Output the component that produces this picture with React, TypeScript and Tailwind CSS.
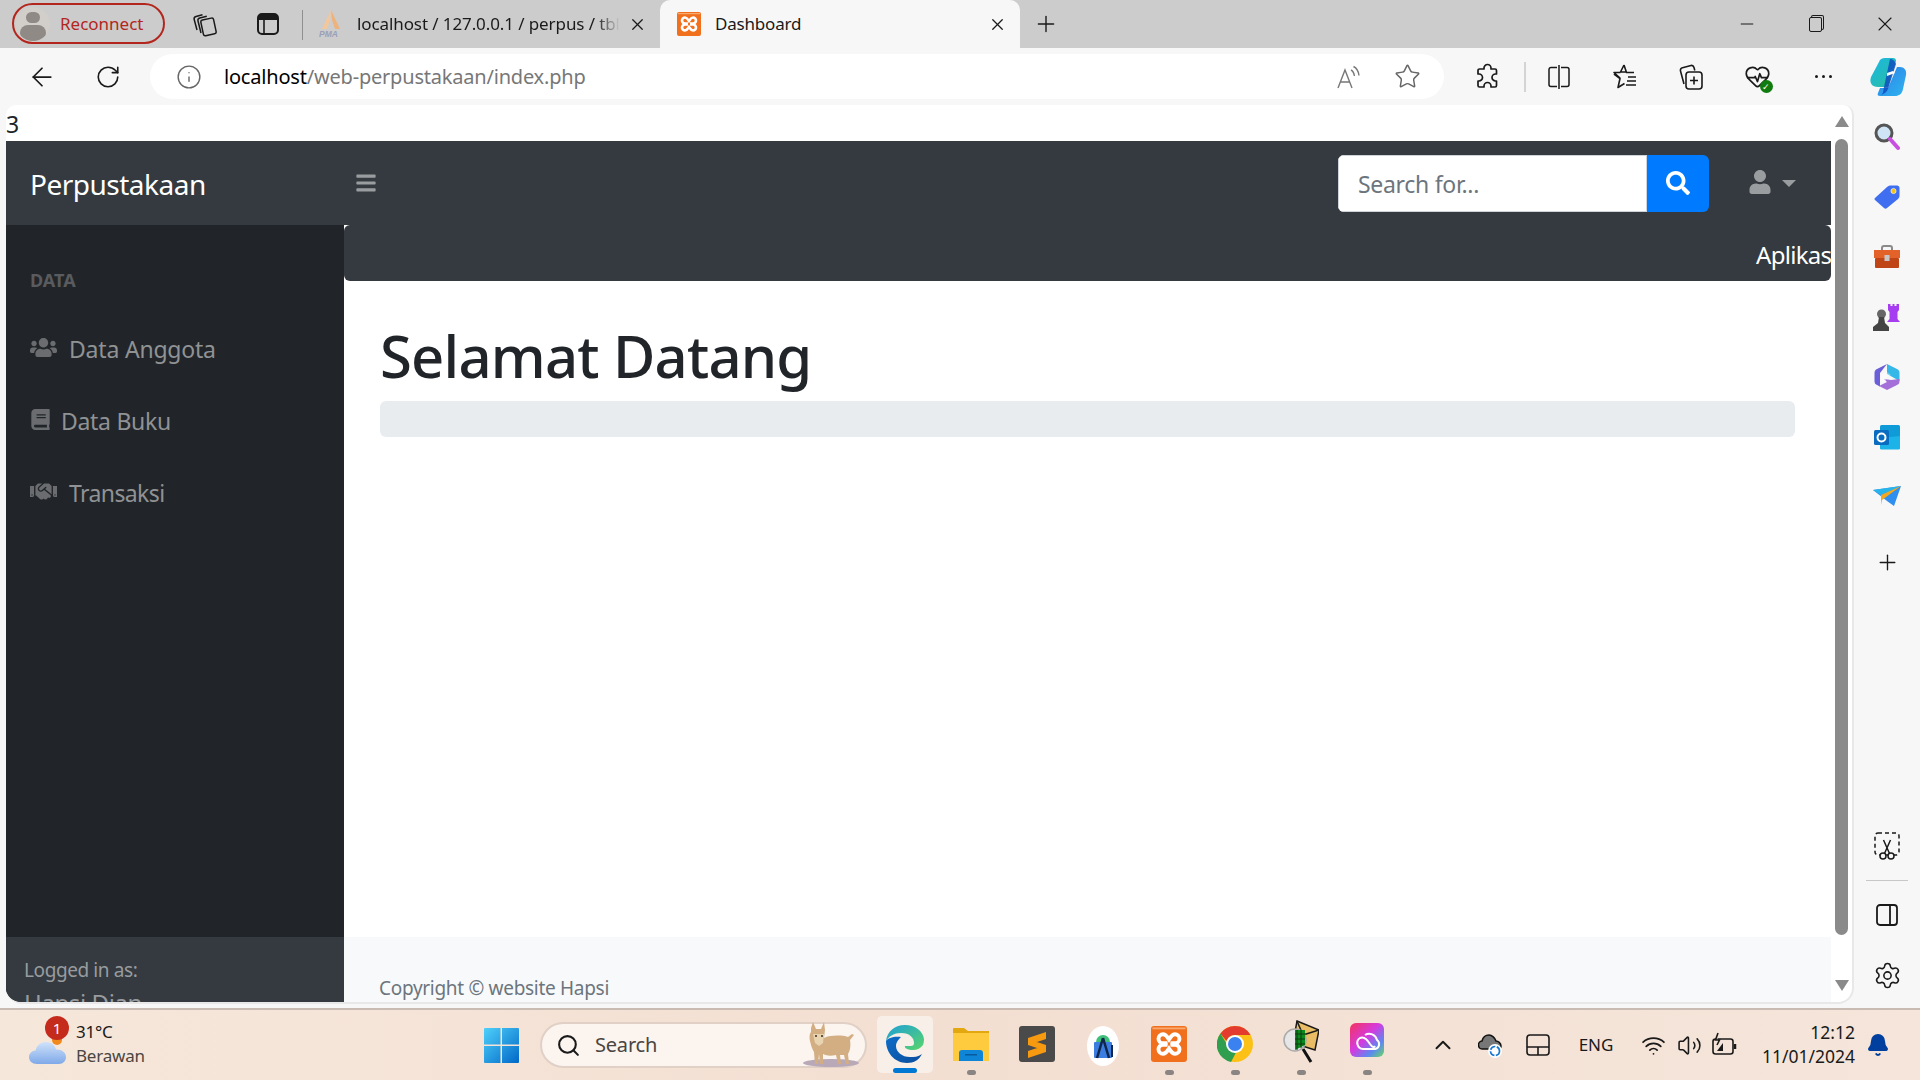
import React from "react";
import { ArrowLeft, RotateCw, Info, Star, Plus, X, Minus, HeartPulse, ChevronUp, Wifi, Volume2, Bell, Settings, Search } from "lucide-react";
import { FaUsers, FaBook, FaHandshake, FaSearch, FaUser, FaBars } from "react-icons/fa";

function Xampp({ s = 24 }: { s?: number }) {
  return (
    <svg width={s} height={s} viewBox="0 0 24 24">
      <rect x="0" y="0" width="24" height="24" rx="2" fill="#f0701e" />
      <rect x="1" y="1" width="22" height="1.2" fill="#f9a870" />
      <g fill="none" stroke="#fff" strokeWidth="2.6">
        <path d="M11 11.5H8a3 3 0 1 1 0-6c2 0 3 2 4 3.5 1-1.5 2-3.5 4-3.5a3 3 0 1 1 0 6h-3" />
        <path d="M11 12.5H8a3 3 0 1 0 0 6c2 0 3-2 4-3.5 1 1.5 2 3.5 4 3.5a3 3 0 1 0 0-6h-3" />
      </g>
    </svg>
  );
}
function Collections() {
  return (
    <svg width="26" height="26" viewBox="0 0 26 26" fill="none" stroke="#1a1a1a" strokeWidth="1.5" strokeLinejoin="round">
      <rect x="11" y="8" width="13" height="16" rx="2" transform="rotate(-12 17 16)" />
      <path d="M10 22 7 10c-.4-1.5.4-2.6 1.8-3l7-1.7" />
      <path d="M6 19 3.2 8.5c-.4-1.5.4-2.6 1.8-3l6.5-1.8" />
    </svg>
  );
}
function TabIcon() {
  return (
    <svg width="24" height="24" viewBox="0 0 24 24" fill="none">
      <rect x="2" y="2" width="20" height="20" rx="4" stroke="#1a1a1a" strokeWidth="2" />
      <path d="M2 6a4 4 0 0 1 4-4h12a4 4 0 0 1 4 4v2H2z" fill="#1a1a1a" />
      <path d="M8 8v14" stroke="#1a1a1a" strokeWidth="1.6" />
    </svg>
  );
}
function Pma() {
  return (
    <svg width="24" height="30" viewBox="0 0 24 30">
      <path d="M12 1 3 20h5l3-9z" fill="#f3c79b" />
      <path d="M12 1 21 20h-5l-3-9z" fill="#eeb27c" />
      <text x="0" y="28" fontSize="8.5" fontStyle="italic" fontWeight="700" fill="#9aa0b8" fontFamily="Liberation Sans">PMA</text>
    </svg>
  );
}
function ReadAloud() {
  return (
    <svg width="26" height="26" viewBox="0 0 26 26" fill="none" stroke="#777" strokeWidth="1.4">
      <path d="M2 24 9 6l7 18M4.5 18h9" />
      <path d="M15 6c2 1 3 3 3.4 6M17.5 2.5c3 1.5 5 4.5 5.5 9" />
    </svg>
  );
}
function PuzzleIcon() {
  return (
    <svg width="26" height="28" viewBox="0 0 26 28" fill="none" stroke="#1a1a1a" strokeWidth="1.7" strokeLinejoin="round">
      <path d="M10 5a3.5 3.5 0 0 1 7 0v1h4a1.5 1.5 0 0 1 1.5 1.5V11h-1a3.5 3.5 0 0 0 0 7h1v4.5a1.5 1.5 0 0 1-1.5 1.5H17v-1a3.5 3.5 0 0 0-7 0v1H5.5A1.5 1.5 0 0 1 4 22.5V18h1a3.5 3.5 0 0 0 0-7H4V7.5A1.5 1.5 0 0 1 5.5 6H10z" />
    </svg>
  );
}
function Split() {
  return (
    <svg width="24" height="26" viewBox="0 0 24 26" fill="none" stroke="#1a1a1a" strokeWidth="1.5">
      <path d="M10 3.5H4a2 2 0 0 0-2 2v15a2 2 0 0 0 2 2h6M14 3.5h6a2 2 0 0 1 2 2v15a2 2 0 0 1-2 2h-6M12 1v24" />
    </svg>
  );
}
function FavList() {
  return (
    <svg width="26" height="28" viewBox="0 0 26 28" fill="none" stroke="#1a1a1a" strokeWidth="1.6" strokeLinejoin="round">
      <path d="M12 2 14.5 9.5H22M2 11l6 4.5-2 9 6.5-4M14 9H8.5L12 2" />
      <path d="M8.5 9.5H2l6 5.5M16 14h8M15 18h9M14 22h10" />
    </svg>
  );
}
function CollectAdd() {
  return (
    <svg width="26" height="28" viewBox="0 0 26 28" fill="none" stroke="#1a1a1a" strokeWidth="1.6">
      <rect x="8" y="9" width="16" height="17" rx="3" />
      <path d="M16 13.5v8M12 17.5h8" />
      <path d="M6 21 2.5 8c-.4-1.6.4-2.8 2-3.2L13 2.5c1.4-.3 2.5.4 3 2l.8 3" />
    </svg>
  );
}
function Copilot() {
  return (
    <svg width="38" height="40" viewBox="0 0 38 40">
      <defs>
        <linearGradient id="cp1" x1="0" y1="0" x2="1" y2="1"><stop offset="0" stopColor="#19b6e8" /><stop offset="1" stopColor="#2cc09a" /></linearGradient>
        <linearGradient id="cp2" x1="0" y1="0" x2="1" y2="1"><stop offset="0" stopColor="#2b7fea" /><stop offset="1" stopColor="#2fb4ee" /></linearGradient>
      </defs>
      <path d="M10 5c1-3 3-4 6-4h8c2 0 3 1 3 3L19 30H9C3 30 0 26 2 20z" fill="url(#cp1)" />
      <path d="M28 10h3c4 0 7 3 6 8l-3 14c-1 5-4 7-8 7H11c-2 0-3-1-2-3l2-5h8z" fill="url(#cp2)" />
      <path d="M21 2c3 0 5 2 6 5l-8 25c-1 3-4 5-7 6 3-2 2-5 3-8z" fill="#0f4fc0" opacity=".85" />
      <path d="M18 16l6-2 2 2-8 3z" fill="#fff" />
    </svg>
  );
}
function Magnifier() {
  return (
    <svg width="26" height="28" viewBox="0 0 26 28">
      <circle cx="10" cy="10" r="8" fill="#cfe4f5" stroke="#555" strokeWidth="3" />
      <path d="M16 16l8 9" stroke="#c84fe0" strokeWidth="4" strokeLinecap="round" />
    </svg>
  );
}
function Tag() {
  return (
    <svg width="26" height="26" viewBox="0 0 26 26">
      <path d="M1 14 13 3c1-1 2-1.5 3-1.5h7c1.5 0 2.5 1 2.5 2.5v8c0 1-.5 2-1.5 3L13 24c-1 1-2 1-3 0l-9-8c-.7-.6-.7-1.4 0-2z" fill="#3f6ff0" />
      <circle cx="19.5" cy="7" r="2.6" fill="#f1c21b" stroke="#fff" strokeWidth=".6" />
    </svg>
  );
}
function Toolbox() {
  return (
    <svg width="28" height="24" viewBox="0 0 28 24">
      <path d="M9 6V3c0-1 1-2 2-2h6c1 0 2 1 2 2v3" fill="none" stroke="#8a8a8a" strokeWidth="2" />
      <rect x="1" y="5" width="26" height="8" fill="#e2622a" />
      <rect x="2" y="13" width="24" height="10" rx="1" fill="#bf4516" />
      <rect x="11.5" y="10" width="5" height="6" fill="#c7c7c7" />
    </svg>
  );
}
function Chess() {
  return (
    <svg width="28" height="28" viewBox="0 0 28 28">
      <path d="M15 1h2.5v2h2V1h2v2h2V1H26v6l-1.5 2v7L27 19H14l2.5-3V9L15 7z" fill="#a73df0" />
      <circle cx="8.5" cy="11" r="4.5" fill="#666" />
      <path d="M6 14h5l1 6 4 4v4H0v-4l5-4z" fill="#444" />
    </svg>
  );
}
function M365() {
  return (
    <svg width="26" height="28" viewBox="0 0 26 28">
      <path d="M13 1 3 6c-2 1-2.5 2-2.5 4v8c0 2 .5 3 2.5 4l3 1.5V10z" fill="#6a5fd8" />
      <path d="M13 1 23 6c2 1 2.5 2 2.5 4v8L13 11z" fill="#35b8e8" />
      <path d="M25.5 16v2c0 2-.5 3-2.5 4l-10 5-8-4 8-4-3-3 7 1z" fill="#a46fd8" />
      <path d="M7 12 13 9l4 3-4 2-2 6-4-1z" fill="#fff" opacity=".35" />
    </svg>
  );
}
function Outlook() {
  return (
    <svg width="26" height="26" viewBox="0 0 26 26">
      <rect x="6" y="1" width="20" height="24" rx="1.5" fill="#0f9ad8" />
      <path d="M6 14 26 12v12a1.5 1.5 0 0 1-1.5 1.5h-17A1.5 1.5 0 0 1 6 24z" fill="#1cb3e8" />
      <rect x="0" y="6" width="15" height="15" rx="1.5" fill="#0a6cc0" />
      <circle cx="7.5" cy="13.5" r="4" fill="none" stroke="#fff" strokeWidth="2" />
    </svg>
  );
}
function Plane() {
  return (
    <svg width="28" height="22" viewBox="0 0 28 22">
      <path d="M0 4 28 0 21 20 14 15z" fill="#2f8ff0" />
      <path d="M0 4 28 0 8 9z" fill="#28b4ea" />
      <path d="M8 9 28 0 9 14 8 19z" fill="#f3a81c" />
    </svg>
  );
}
function Snip() {
  return (
    <svg width="26" height="28" viewBox="0 0 26 28" fill="none" stroke="#1a1a1a" strokeWidth="1.5">
      <rect x="1" y="1" width="24" height="22" rx="3" strokeDasharray="4 3" />
      <circle cx="9" cy="24" r="3" fill="#f7f7f7" />
      <circle cx="17" cy="24" r="3" fill="#f7f7f7" />
      <path d="M10.5 21.5 16.5 8M15.5 21.5 9.5 8" />
    </svg>
  );
}
function SidePanel() {
  return (
    <svg width="22" height="22" viewBox="0 0 22 22" fill="none" stroke="#1a1a1a" strokeWidth="1.8">
      <rect x="1" y="1" width="20" height="20" rx="3" />
      <path d="M14 1v20" />
    </svg>
  );
}
function WinLogo() {
  return (
    <svg width="35" height="35" viewBox="0 0 35 35">
      <defs><linearGradient id="wl" x1="0" y1="0" x2="1" y2="1"><stop offset="0" stopColor="#4fd0fa" /><stop offset="1" stopColor="#0068c8" /></linearGradient></defs>
      <path d="M0 1a1 1 0 0 1 1-1h15.5v16.5H0zM18 0h16a1 1 0 0 1 1 1v15.5H18zM0 18h16.5v17H1a1 1 0 0 1-1-1zM18 18h17v16a1 1 0 0 1-1 1H18z" fill="url(#wl)" />
    </svg>
  );
}
function Cloud() {
  return (
    <svg width="38" height="32" viewBox="0 0 38 32">
      <defs><linearGradient id="cl" x1="0" y1="0" x2="0" y2="1"><stop offset="0" stopColor="#cfe2fa" /><stop offset="1" stopColor="#7fa9e8" /></linearGradient></defs>
      <circle cx="28" cy="7" r="5" fill="#f08a1e" />
      <path d="M8 31C3 31 0 28 0 24c0-3.5 3-6.5 6.5-6.5C8 12 12 9 17 9c5 0 9 3 10 7.5 5.5-.5 10 3 10 7.5 0 4-3 7-7 7z" fill="url(#cl)" />
    </svg>
  );
}
function Lynx() {
  return (
    <svg width="62" height="46" viewBox="0 0 62 46">
      <ellipse cx="34" cy="41" rx="28" ry="4" fill="#b9a9b8" />
      <path d="M14 6 16 0l3 7 5 0 3-7 1 8-1 8c6-3 18-3 24-1l4-3 2 1-4 5c1 6 0 11-2 14l1 10h-3l-2-9-4 0 1 9h-3l-2-9c-5 1-9 1-13-1l0 10h-3l-1-10-1 10h-3l-1-12c-2-3-3-7-4-11-1-5 0-8 1-9z" fill="#d3ae82" />
      <path d="M16 12h11l-1 9-4 3-4-3z" fill="#e9d4b2" />
      <circle cx="19" cy="14" r="1" fill="#3a2a1a" /><circle cx="25" cy="14" r="1" fill="#3a2a1a" />
    </svg>
  );
}
function Edge() {
  return (
    <svg width="38" height="38" viewBox="0 0 38 38">
      <defs>
        <linearGradient id="e1" x1="0" y1="0" x2="1" y2="1"><stop offset="0" stopColor="#1e9fd8" /><stop offset="1" stopColor="#58d66a" /></linearGradient>
        <linearGradient id="e2" x1="0" y1="0" x2="1" y2="1"><stop offset="0" stopColor="#0f6cc8" /><stop offset="1" stopColor="#0a4d9c" /></linearGradient>
      </defs>
      <path d="M19 0C8 0 1 7 0 16c3-5 8-8 15-8 9 0 13 5 13 10 0 2-1 3-3 3h-6c-1 2 3 4 8 4 4 0 8-2 10-5 1-3 1-5 1-6C37 6 29 0 19 0z" fill="url(#e1)" />
      <path d="M0 16c0 11 8 22 21 22 7 0 12-3 15-9-4 3-8 3-12 3-8 0-14-5-14-11 0-4 3-7 5-9C8 11 2 13 0 16z" fill="url(#e2)" />
    </svg>
  );
}
function Folder() {
  return (
    <svg width="36" height="36" viewBox="0 0 36 36">
      <path d="M0 3a1 1 0 0 1 1-1h10l4 3h21v30H0z" fill="#e3a70f" />
      <path d="M0 7h36v28H0z" fill="#fdcb3d" />
      <path d="M6 35v-8a3 3 0 0 1 3-3h18a3 3 0 0 1 3 3v8z" fill="#0f85d8" />
      <rect x="12" y="28" width="12" height="1.5" fill="#075a9c" />
    </svg>
  );
}
function Sublime() {
  return (
    <svg width="36" height="36" viewBox="0 0 36 36">
      <rect width="36" height="36" rx="3" fill="#4a4a4a" />
      <path d="M27 6v7L9 19v-7zM9 13l18 6v6L9 19zM27 19v7L9 32v-7z" fill="#f79a10" />
    </svg>
  );
}
function AStudio() {
  return (
    <svg width="32" height="40" viewBox="0 0 32 40">
      <ellipse cx="16" cy="20" rx="16" ry="20" fill="#fff" />
      <path d="M9 16a7 7 0 0 1 14 0z" fill="#3fbf7a" />
      <rect x="7" y="16" width="18" height="16" rx="1" fill="#3b7de0" />
      <path d="M16 12 10 32M16 12l6 20" stroke="#10264a" strokeWidth="2.5" fill="none" />
      <path d="M25 19v12" stroke="#10264a" strokeWidth="2" />
    </svg>
  );
}
function Chrome() {
  return (
    <svg width="36" height="44" viewBox="0 0 36 36">
      <circle cx="18" cy="18" r="18" fill="#fbc116" />
      <path d="M18 0a18 18 0 0 1 15.6 9H18a9 9 0 0 0-8.5 6L3.4 7.5A18 18 0 0 1 18 0z" fill="#e33b2e" />
      <path d="M3.4 7.5 11 20a8 8 0 0 0 8 6.5L14 36A18 18 0 0 1 3.4 7.5z" fill="#2f9e4f" />
      <circle cx="18" cy="18" r="9" fill="#fff" />
      <circle cx="18" cy="18" r="7" fill="#3b82f0" />
    </svg>
  );
}
function MailSearch() {
  return (
    <svg width="36" height="44" viewBox="0 0 36 44">
      <path d="M14 2 36 11l-4 20-22-7z" fill="#e8bd65" stroke="#1a1a1a" strokeWidth="1.5" />
      <path d="M14 2l6 14 16-5" fill="none" stroke="#1a1a1a" strokeWidth="1.5" />
      <circle cx="12" cy="21" r="11" fill="#e6e6e6" stroke="#aaa" strokeWidth="1.5" />
      <path d="M12 11h10v15l-10 5z" fill="#0a8a1e" />
      <path d="M14 11v20M18 11v18M12 15h10M12 20h10M12 25h10" stroke="#0a3a0e" strokeWidth="1" />
      <path d="M20 30l8 13" stroke="#111" strokeWidth="3" />
    </svg>
  );
}
function CreativeCloud() {
  return (
    <svg width="34" height="40" viewBox="0 0 34 40">
      <defs><linearGradient id="cc" x1="0" y1="0" x2="1" y2="1"><stop offset="0" stopColor="#f5325c" /><stop offset=".45" stopColor="#d43be0" /><stop offset=".75" stopColor="#5a8af0" /><stop offset="1" stopColor="#6adc5a" /></linearGradient></defs>
      <rect width="34" height="34" y="2" rx="6" fill="url(#cc)" />
      <path d="M15 14a8 8 0 0 1 12 5 5 5 0 0 1-2 9H13a6 6 0 0 1-3-11c4-2 7 1 10 6 2 3 4 4 5 2" fill="none" stroke="#fff" strokeWidth="2" />
    </svg>
  );
}
function OneDrive() {
  return (
    <svg width="26" height="26" viewBox="0 0 26 26">
      <path d="M5 17a4 4 0 0 1-1-8c1-4 4-6 7-6s6 3 7 6c2 0 5 2 5 5 0 2-1 3-3 3z" fill="#777" stroke="#111" strokeWidth="1.5" />
      <circle cx="17" cy="19" r="7" fill="#fff" />
      <circle cx="17" cy="19" r="4.5" fill="none" stroke="#1a78d0" strokeWidth="1.7" strokeDasharray="6 1.5" />
    </svg>
  );
}
function Touchpad() {
  return (
    <svg width="24" height="22" viewBox="0 0 24 22" fill="none" stroke="#1a1a1a" strokeWidth="1.6">
      <rect x="1" y="1" width="22" height="20" rx="3" />
      <path d="M1 13h22M12 13v8" />
    </svg>
  );
}
function Battery() {
  return (
    <svg width="26" height="26" viewBox="0 0 26 26" fill="none" stroke="#1a1a1a" strokeWidth="1.6">
      <rect x="1" y="7" width="20" height="15" rx="2.5" />
      <path d="M23 12v5" strokeWidth="2.5" />
      <path d="M6 1 3.5 8h4L5 13" fill="#f4e4d8" />
      <path d="M5 19l6-8v8z" fill="#1a1a1a" stroke="none" />
    </svg>
  );
}

function Dot() {
  return <div className="mt-auto mb-[5px] h-[5px] w-[9px] rounded-full bg-[#8a8583]" />;
}

export default function App() {
  return (
    <div className="flex h-[1080px] w-[1920px] flex-col overflow-hidden bg-[#f7f7f7] font-['Noto_Sans',sans-serif] text-[#1a1a1a]">
      {/* tab strip */}
      <div className="flex h-[48px] shrink-0 items-end bg-[#cccccc]">
        <div className="mb-[4px] ml-[12px] flex h-[41px] w-[153px] items-center rounded-full border-2 border-[#b3261e] pl-[2px]">
          <div className="flex h-[34px] w-[34px] flex-col items-center overflow-hidden rounded-full bg-[#d2cfcb]">
            <div className="mt-[5px] h-[14px] w-[14px] rounded-full bg-[#8f8a85]" />
            <div className="mt-[2px] h-[20px] w-[26px] rounded-full bg-[#8f8a85]" />
          </div>
          <span className="ml-[10px] text-[17px] text-[#b3261e]">Reconnect</span>
        </div>
        <div className="flex h-[48px] w-[78px] items-center justify-center"><Collections /></div>
        <div className="flex h-[48px] w-[50px] items-center justify-center"><TabIcon /></div>
        <div className="mb-[8px] ml-[9px] h-[30px] w-px bg-[#8f8f8f]" />
        <div className="flex h-[48px] w-[357px] items-center pl-[16px]">
          <Pma />
          <div className="ml-[14px] w-[271px] shrink-0 overflow-hidden whitespace-nowrap text-[17px] tracking-[-0.1px] [mask-image:linear-gradient(90deg,#000_88%,transparent_97%)]">localhost / 127.0.0.1 / perpus / tbl_buku</div>
          <X size={19} strokeWidth={1.6} />
        </div>
        <div className="flex h-[48px] w-[360px] items-center rounded-t-[10px] bg-[#f7f7f7] pl-[17px]">
          <Xampp />
          <span className="ml-[14px] text-[17px] tracking-[-0.2px]">Dashboard</span>
          <X size={19} strokeWidth={1.6} className="ml-[187px]" />
        </div>
        <div className="flex h-[48px] w-[52px] items-center justify-center"><Plus size={26} strokeWidth={1.3} /></div>
        <div className="flex-1" />
        <div className="flex h-[48px] w-[69px] items-center justify-center"><Minus size={20} strokeWidth={1.2} /></div>
        <div className="flex h-[48px] w-[69px] items-center justify-center">
          <div className="relative h-[15px] w-[13px] rounded-[2px] border border-[#1a1a1a] shadow-[2px_-2px_0_-1px_#cccccc,2px_-2px_0_0_#1a1a1a]" />
        </div>
        <div className="flex h-[48px] w-[70px] items-center justify-center"><X size={24} strokeWidth={1.1} /></div>
      </div>

      {/* toolbar */}
      <div className="flex h-[57px] shrink-0 items-center bg-[#f7f7f7]">
        <div className="flex w-[84px] shrink-0 justify-center"><ArrowLeft size={30} strokeWidth={1.4} /></div>
        <div className="flex w-[48px] shrink-0 justify-center"><RotateCw size={26} strokeWidth={1.5} /></div>
        <div className="ml-[18px] flex h-[45px] w-[1294px] shrink-0 items-center rounded-full bg-white pl-[26px]">
          <Info size={26} strokeWidth={1.3} color="#666" />
          <div className="ml-[22px] text-[20px] tracking-[-0.2px]"><span className="text-black">localhost</span><span className="text-[#777]">/web-perpustakaan/index.php</span></div>
          <div className="flex-1" />
          <ReadAloud />
          <div className="ml-[32px] mr-[23px]"><Star size={27} strokeWidth={1.3} color="#666" /></div>
        </div>
        <div className="w-[80px] shrink-0 pl-[30px]"><PuzzleIcon /></div>
        <div className="h-[30px] w-[2px] shrink-0 bg-[#d4d4d4]" />
        <div className="flex w-[66px] shrink-0 justify-center"><Split /></div>
        <div className="flex w-[66px] shrink-0 justify-center"><FavList /></div>
        <div className="flex w-[66px] shrink-0 justify-center"><CollectAdd /></div>
        <div className="flex w-[66px] shrink-0 justify-center">
          <div className="relative"><HeartPulse size={27} strokeWidth={1.5} /><div className="absolute -bottom-[3px] -right-[2px] flex h-[13px] w-[13px] items-center justify-center rounded-full bg-[#107c10] text-[9px] leading-none text-white">✓</div></div>
        </div>
        <div className="flex w-[66px] shrink-0 justify-center gap-[4px]"><i className="h-[3px] w-[3px] rounded-full bg-[#1a1a1a]" /><i className="h-[3px] w-[3px] rounded-full bg-[#1a1a1a]" /><i className="h-[3px] w-[3px] rounded-full bg-[#1a1a1a]" /></div>
        <div className="flex w-[64px] shrink-0 justify-center"><Copilot /></div>
      </div>

      {/* body */}
      <div className="flex h-[903px] shrink-0">
        <div className="ml-[6px] flex h-[899px] w-[1848px] overflow-hidden rounded-t-[10px] rounded-b-[16px] border-r-2 border-b-2 border-[#e8e8e8] bg-white">
          <div className="flex w-[1825px] shrink-0 flex-col">
            <div className="h-[36px] shrink-0 text-[23px] leading-[38px] text-[#212529]">3</div>
            {/* navbar */}
            <div className="flex h-[84px] shrink-0 items-center bg-[#343a40]">
              <div className="w-[350px] pl-[24px] pt-[1px] text-[28px] tracking-[-0.5px] text-white">Perpustakaan</div>
              <FaBars size={22} color="#9a9da0" className="-mt-[1px] -ml-[1px]" />
              <div className="flex-1" />
              <div className="flex h-[57px] w-[371px] overflow-hidden rounded-[6px]">
                <div className="flex flex-1 items-center border border-[#ced4da] bg-white pl-[19px] pt-[2px] text-[23px] tracking-[-0.3px] text-[#6c757d]">Search for...</div>
                <div className="flex w-[62px] items-center justify-center bg-[#007bff]"><FaSearch size={24} color="#fff" /></div>
              </div>
              <div className="ml-[39px] mr-[35px] flex items-center text-[#9a9da0]">
                <FaUser size={24} className="-mt-[2px]" />
                <div className="ml-[10px] h-0 w-0 border-x-[7px] border-t-[7px] border-x-transparent border-t-[#9a9da0]" />
              </div>
            </div>
            <div className="flex min-h-0 flex-1">
              {/* sidebar */}
              <div className="flex w-[338px] shrink-0 flex-col bg-[#212529]">
                <div className="pl-[24px] pt-[43px] text-[18px] font-bold leading-[24px] text-[#595b5e]">DATA</div>
                <div className="mt-[21px] flex h-[72px] items-center pl-[24px] text-[23px] tracking-[-0.2px] text-[#909294]"><FaUsers size={27} color="#6a6c6f" className="-mt-[3px]" /><span className="ml-[12px]">Data Anggota</span></div>
                <div className="flex h-[72px] items-center pl-[24px] text-[23px] tracking-[-0.3px] text-[#909294]"><FaBook size={21} color="#6a6c6f" className="-mt-[3px]" /><span className="ml-[10px]">Data Buku</span></div>
                <div className="flex h-[72px] items-center pl-[24px] text-[23px] tracking-[-0.6px] text-[#909294]"><FaHandshake size={27} color="#6a6c6f" className="-mt-[3px]" /><span className="ml-[12px]">Transaksi</span></div>
                <div className="flex-1" />
                <div className="h-[65px] shrink-0 overflow-hidden bg-[#343a40] pl-[18px] pt-[19px] text-[19px] leading-[28px] tracking-[-0.4px] text-[#999c9f]">
                  <div>Logged in as:</div>
                  <div className="mt-[5px] text-[24px]">Hapsi Dian</div>
                </div>
              </div>
              {/* main */}
              <div className="flex min-w-0 flex-1 flex-col">
                <div className="flex h-[56px] shrink-0 items-center overflow-hidden rounded-[6px] bg-[#343a40] pl-[1412px] pt-[3px] whitespace-nowrap text-[24px] tracking-[-0.7px] text-white">Aplikasi Perpustakaan</div>
                <div className="flex-1 px-[36px]">
                  <h1 className="mt-[39px] text-[58px] font-medium leading-[72px] tracking-[-0.8px] text-[#212529]">Selamat Datang</h1>
                  <div className="mt-[9px] h-[36px] w-full rounded-[6px] bg-[#e9ecef]" />
                </div>
                <div className="h-[65px] shrink-0 bg-[#f8f9fa] pl-[35px] pt-[36px] text-[19px] leading-[30px] tracking-[-0.3px] text-[#6c757d]">Copyright © website Hapsi</div>
              </div>
            </div>
          </div>
          {/* scrollbar */}
          <div className="flex flex-1 flex-col items-center pt-[11px]">
            <div className="h-0 w-0 border-x-[7px] border-b-[11px] border-x-transparent border-b-[#8a8a8a]" />
            <div className="mt-[12px] h-[796px] w-[13px] rounded-full bg-[#8a8a8a]" />
            <div className="mt-[45px] h-0 w-0 border-x-[7px] border-t-[11px] border-x-transparent border-t-[#8a8a8a]" />
          </div>
        </div>
        {/* right rail */}
        <div className="flex w-[66px] flex-col items-center pt-[2px] text-[#1a1a1a]">
          <div className="flex h-[60px] items-center"><Magnifier /></div>
          <div className="flex h-[60px] items-center"><Tag /></div>
          <div className="flex h-[60px] items-center"><Toolbox /></div>
          <div className="flex h-[60px] items-center"><Chess /></div>
          <div className="flex h-[60px] items-center"><M365 /></div>
          <div className="flex h-[60px] items-center"><Outlook /></div>
          <div className="flex h-[60px] items-center"><Plane /></div>
          <div className="flex h-[70px] items-center"><Plus size={25} strokeWidth={1.3} /></div>
          <div className="flex-1" />
          <div className="flex h-[40px] items-center"><Snip /></div>
          <div className="my-[14px] h-px w-[42px] bg-[#c8c8c8]" />
          <div className="flex h-[40px] items-center"><SidePanel /></div>
          <div className="mb-[13px] mt-[20px] flex h-[40px] items-center"><Settings size={29} strokeWidth={1.3} /></div>
        </div>
      </div>

      {/* taskbar */}
      <div className="flex h-[72px] shrink-0 items-center border-t-2 border-[#c9bab2] bg-gradient-to-r from-[#f6e7db] via-[#f3dfd2] to-[#f5e5da]">
        <div className="flex h-full w-[484px] items-center pl-[29px]">
          <div className="relative mt-[10px] h-[34px] w-[38px]">
            <Cloud />
            <div className="absolute -right-[2px] -top-[17px] flex h-[24px] w-[24px] items-center justify-center rounded-full bg-[#c42b1c] text-[15px] text-white">1</div>
          </div>
          <div className="-mt-[2px] ml-[9px] flex flex-col text-[17px] leading-[24px] tracking-[-0.2px]">
            <span className="text-[#1a1a1a]">31°C</span>
            <span className="text-[#4a4540]">Berawan</span>
          </div>
        </div>
        <WinLogo />
        <div className="ml-[21px] flex h-[46px] w-[327px] items-center rounded-full border-2 border-[#e0d0c6] bg-[#fbf4ef] pl-[14px]">
          <Search size={25} strokeWidth={2} />
          <span className="ml-[14px] text-[20px] tracking-[-0.2px] text-[#4a4540]">Search</span>
          <div className="flex-1" />
          <div className="mr-[6px]"><Lynx /></div>
        </div>
        <div className="ml-[5px] flex h-full">
          <div className="flex w-[66px] flex-col items-center">
            <div className="mt-[6px] flex h-[57px] w-[56px] flex-col items-center rounded-[5px] bg-[#f8efe9] pt-[9px]">
              <Edge />
              <div className="mt-auto h-[5px] w-[24px] rounded-full bg-[#0078d4]" />
            </div>
          </div>
          <div className="flex w-[66px] flex-col items-center pt-[16px]"><Folder /><Dot /></div>
          <div className="flex w-[66px] flex-col items-center pt-[16px]"><Sublime /></div>
          <div className="flex w-[66px] flex-col items-center pt-[16px]"><AStudio /></div>
          <div className="flex w-[66px] flex-col items-center pt-[16px]"><Xampp s={36} /><Dot /></div>
          <div className="flex w-[66px] flex-col items-center pt-[12px]"><Chrome /><Dot /></div>
          <div className="flex w-[66px] flex-col items-center pt-[9px]"><MailSearch /><Dot /></div>
          <div className="flex w-[66px] flex-col items-center pt-[11px]"><CreativeCloud /><Dot /></div>
        </div>
        <div className="ml-[20px] flex w-[46px] justify-center"><ChevronUp size={26} strokeWidth={1.8} /></div>
        <div className="flex w-[50px] justify-center"><OneDrive /></div>
        <div className="flex w-[44px] justify-center"><Touchpad /></div>
        <div className="flex w-[72px] justify-center text-[17px]">ENG</div>
        <div className="flex w-[42px] justify-center"><Wifi size={25} strokeWidth={1.7} /></div>
        <div className="flex w-[30px] justify-center"><Volume2 size={25} strokeWidth={1.5} /></div>
        <div className="flex w-[42px] justify-center"><Battery /></div>
        <div className="-mt-[2px] flex w-[109px] flex-col items-end text-[17.5px] leading-[24px]">
          <span>12:12</span>
          <span>11/01/2024</span>
        </div>
        <div className="flex w-[46px] justify-center"><Bell size={24} fill="#003f9e" color="#003f9e" /></div>
      </div>
    </div>
  );
}
